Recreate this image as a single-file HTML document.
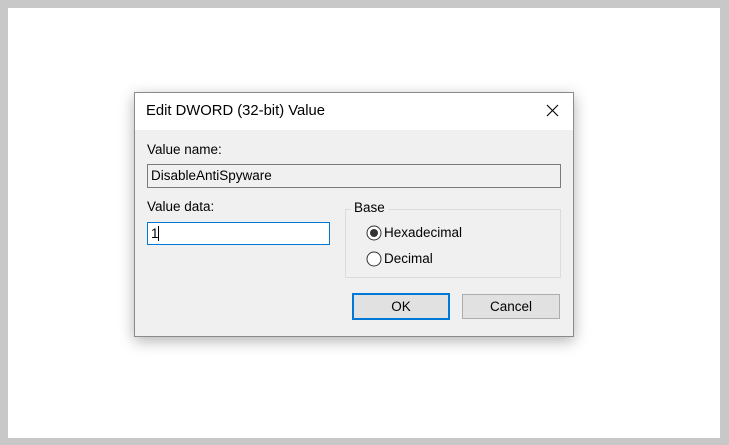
<!DOCTYPE html>
<html><head><style>
body{margin:0;width:729px;height:445px;background:#c8c8c8;position:relative;overflow:hidden;font-family:"Liberation Sans",sans-serif;font-size:13.5px;color:#000}
.w{position:absolute;left:8px;top:8px;width:712px;height:430px;background:#fff}
.d{position:absolute;left:134px;top:92px;width:438px;height:243px;background:#f0f0f0;border:1px solid #8a8a8a;box-shadow:0 4px 14px rgba(0,0,0,.3)}
.t{position:absolute;left:0;top:0;width:438px;height:37px;background:#fff}
.a{position:absolute;white-space:nowrap}
</style></head><body>
<div class="w"></div>
<div class="d">
<div class="t"></div>
<div class="a" style="left:11px;top:10px;font-size:14.8px">Edit DWORD (32-bit) Value</div>
<svg class="a" style="left:411px;top:11px" width="13" height="13"><path d="M1 1L12 12M12 1L1 12" stroke="#000" stroke-width="1.1"/></svg>
<div class="a" style="left:12px;top:49px">Value name:</div>
<div class="a" style="left:12px;top:71px;width:412px;height:22px;border:1px solid #7a7a7a;background:#f0f0f0"><span style="position:absolute;left:3px;top:3px">DisableAntiSpyware</span></div>
<div class="a" style="left:12px;top:106px">Value data:</div>
<div class="a" style="left:12px;top:129px;width:181px;height:21px;border:1px solid #0078d7;background:#fff"><span style="position:absolute;left:3px;top:3px">1</span><span style="position:absolute;left:10px;top:3px;width:1px;height:15px;background:#000"></span></div>
<div class="a" style="left:210px;top:116px;width:214px;height:67px;border:1px solid #dcdcdc"></div>
<div class="a" style="left:216px;top:107px;background:#f0f0f0;padding:0 3px">Base</div>
<svg class="a" style="left:231px;top:132px" width="16" height="16"><circle cx="8" cy="8" r="7" fill="#fff" stroke="#333"/><circle cx="8" cy="8" r="4" fill="#333"/></svg>
<div class="a" style="left:249px;top:132px">Hexadecimal</div>
<svg class="a" style="left:231px;top:158px" width="16" height="16"><circle cx="8" cy="8" r="7" fill="#fff" stroke="#333"/></svg>
<div class="a" style="left:249px;top:158px">Decimal</div>
<div class="a" style="left:217px;top:200px;width:94px;height:23px;border:2px solid #0078d7;background:#e1e1e1;text-align:center;line-height:23px">OK</div>
<div class="a" style="left:327px;top:201px;width:96px;height:23px;border:1px solid #adadad;background:#e1e1e1;text-align:center;line-height:23px">Cancel</div>
</div>
</body></html>
